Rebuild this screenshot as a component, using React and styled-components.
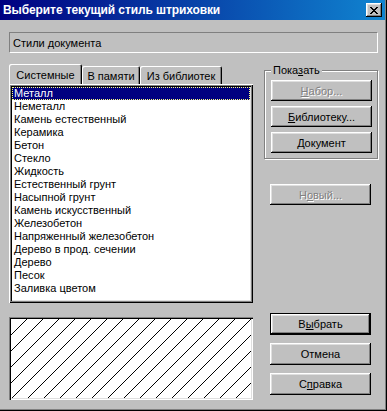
import React from 'react';
import styled, { createGlobalStyle } from 'styled-components';

const GlobalStyle = createGlobalStyle`
  html, body {
    margin: 0;
    padding: 0;
    background: #c0c0c0;
  }
  body {
    font-family: "Liberation Sans", Arial, sans-serif;
    font-size: 11px;
    color: #000;
  }
`;

const Window = styled.div`
  width: 387px;
  height: 411px;
  box-sizing: border-box;
  padding: 0 2px 2px 0;
  background: #c0c0c0;
  box-shadow: inset -1px -1px #000, inset -2px -2px #808080;
  display: flex;
  flex-direction: column;
`;

const TitleBar = styled.div`
  height: 20px;
  display: flex;
  align-items: center;
  justify-content: space-between;
  padding: 0 3px 0 3px;
  background: linear-gradient(to right, #000080, #1084d0);
  color: #fff;
  font-weight: bold;
  font-size: 12px;
  letter-spacing: -0.1px;
`;

const CloseButton = styled.div`
  width: 16px;
  height: 14px;
  box-sizing: border-box;
  background: #c0c0c0;
  box-shadow: inset -1px -1px #000, inset 1px 1px #fff, inset -2px -2px #808080, inset 2px 2px #dfdfdf;
  display: flex;
  align-items: center;
  justify-content: center;
`;

const Body = styled.div`
  padding: 12px 0 0 9px;
  display: flex;
  flex-direction: column;
`;

const DocField = styled.div`
  width: 369px;
  height: 21px;
  box-sizing: border-box;
  border: 1px solid;
  border-color: #808080 #fff #fff #808080;
  padding: 0 3px;
  display: flex;
  align-items: center;
`;

const Main = styled.div`
  margin-top: 11px;
  display: grid;
  grid-template-columns: 244px 114px;
  grid-template-rows: 249px auto;
  column-gap: 11px;
`;

const LeftTop = styled.div`
  display: flex;
  flex-direction: column;
`;

const Tabs = styled.div`
  height: 20px;
  display: flex;
  align-items: flex-end;
`;

const Tab = styled.div`
  width: ${p => p.$w}px;
  height: ${p => (p.$active ? 20 : 18)}px;
  box-sizing: border-box;
  border-radius: 2px 2px 0 0;
  box-shadow: inset 1px 1px #fff, inset -1px 0 #000, inset -2px 0 #808080;
  display: flex;
  align-items: center;
  justify-content: center;
  padding-top: ${p => (p.$active ? 1 : 2)}px;
`;

const ListBox = styled.div`
  height: 219px;
  box-sizing: border-box;
  padding: 3px;
  background: #fff;
  box-shadow: inset 1px 1px #fff, inset -1px -1px #000, inset 2px 2px #808080,
    inset -2px -2px #808080, inset 3px 3px #000, inset -3px -3px #dfdfdf;
`;

const Item = styled.div`
  height: 13px;
  line-height: 13px;
  padding-left: 2px;
  white-space: nowrap;
  background: ${p => (p.$selected ? '#000080' : 'transparent')};
  color: ${p => (p.$selected ? '#fff' : '#000')};
  outline: ${p => (p.$selected ? '1px dotted #ffff80' : 'none')};
  outline-offset: -1px;
`;

const RightTop = styled.div`
  display: flex;
  flex-direction: column;
`;

const GroupBox = styled.div`
  position: relative;
  margin-top: 6px;
  height: 89px;
  box-sizing: border-box;
  border: 1px solid #808080;
  box-shadow: inset 1px 1px #fff, 1px 1px #fff;
  padding: 9px 0 0 6px;
  display: flex;
  flex-direction: column;
  gap: 5px;
`;

const GroupLabel = styled.span`
  position: absolute;
  top: -7px;
  left: 6px;
  padding: 0 2px;
  background: #c0c0c0;
  line-height: 13px;
`;

const Button = styled.div`
  width: 101px;
  height: ${p => p.$h || 21}px;
  box-sizing: border-box;
  margin-left: ${p => p.$ml || 0}px;
  margin-top: ${p => p.$mt || 0}px;
  background: #c0c0c0;
  border: ${p => (p.$default ? '1px solid #000' : 'none')};
  box-shadow: inset -1px -1px #000, inset 1px 1px #fff, inset -2px -2px #808080, inset 2px 2px #dfdfdf;
  display: flex;
  align-items: center;
  justify-content: center;
  color: ${p => (p.$disabled ? '#808080' : '#000')};
  text-shadow: ${p => (p.$disabled ? '1px 1px #fff' : 'none')};
`;

const Preview = styled.div`
  margin-top: 4px;
  height: 83px;
  box-sizing: border-box;
  padding: 2px;
  background: #fff;
  box-shadow: inset 1px 1px #808080, inset 2px 2px #000, inset -1px -1px #fff, inset -2px -2px #dfdfdf;
  display: flex;
`;

const BottomButtons = styled.div`
  display: flex;
  flex-direction: column;
  gap: 8px;
  padding-left: 6px;
`;

const items = [
  'Металл',
  'Неметалл',
  'Камень естественный',
  'Керамика',
  'Бетон',
  'Стекло',
  'Жидкость',
  'Естественный грунт',
  'Насыпной грунт',
  'Камень искусственный',
  'Железобетон',
  'Напряженный железобетон',
  'Дерево в прод. сечении',
  'Дерево',
  'Песок',
  'Заливка цветом',
];

const Hatch = () => (
  <svg width="100%" height="100%" shapeRendering="crispEdges">
    <defs>
      <pattern id="hatch" width="16" height="16" patternUnits="userSpaceOnUse">
        <line x1="0" y1="16" x2="16" y2="0" stroke="#000" strokeWidth="1" />
      </pattern>
    </defs>
    <rect width="100%" height="100%" fill="url(#hatch)" />
  </svg>
);

const App = () => (
  <>
    <GlobalStyle />
    <Window>
      <TitleBar>
        <span>Выберите текущий стиль штриховки</span>
        <CloseButton>
          <svg width="8" height="7" viewBox="0 0 8 7" shapeRendering="crispEdges">
            <path d="M0 0h2v1h1v1h2v-1h1v-1h2v1h-1v1h-1v1h-1v1h1v1h1v1h1v1h-2v-1h-1v-1h-2v1h-1v1h-2v-1h1v-1h1v-1h1v-1h-1v-1h-1v-1h-1z" fill="#000" />
          </svg>
        </CloseButton>
      </TitleBar>
      <Body>
        <DocField>Стили документа</DocField>
        <Main>
          <LeftTop>
            <Tabs>
              <Tab $active $w={73}>Системные</Tab>
              <Tab $w={58}>В памяти</Tab>
              <Tab $w={82}>Из библиотек</Tab>
            </Tabs>
            <ListBox>
              {items.map((name, i) => (
                <Item key={name} $selected={i === 0}>{name}</Item>
              ))}
            </ListBox>
          </LeftTop>
          <RightTop>
            <GroupBox>
              <GroupLabel>Пока<u>з</u>ать</GroupLabel>
              <Button $disabled><u>Н</u>абор...</Button>
              <Button><u>Б</u>иблиотеку...</Button>
              <Button><u>Д</u>окумент</Button>
            </GroupBox>
            <Button $disabled $ml={6} $mt={25}>Н<u>о</u>вый...</Button>
          </RightTop>
          <Preview>
            <Hatch />
          </Preview>
          <BottomButtons>
            <Button $default $h={22}>В<u>ы</u>брать</Button>
            <Button $h={22}>Отмена</Button>
            <Button $h={22}>С<u>п</u>равка</Button>
          </BottomButtons>
        </Main>
      </Body>
    </Window>
  </>
);

export default App;
